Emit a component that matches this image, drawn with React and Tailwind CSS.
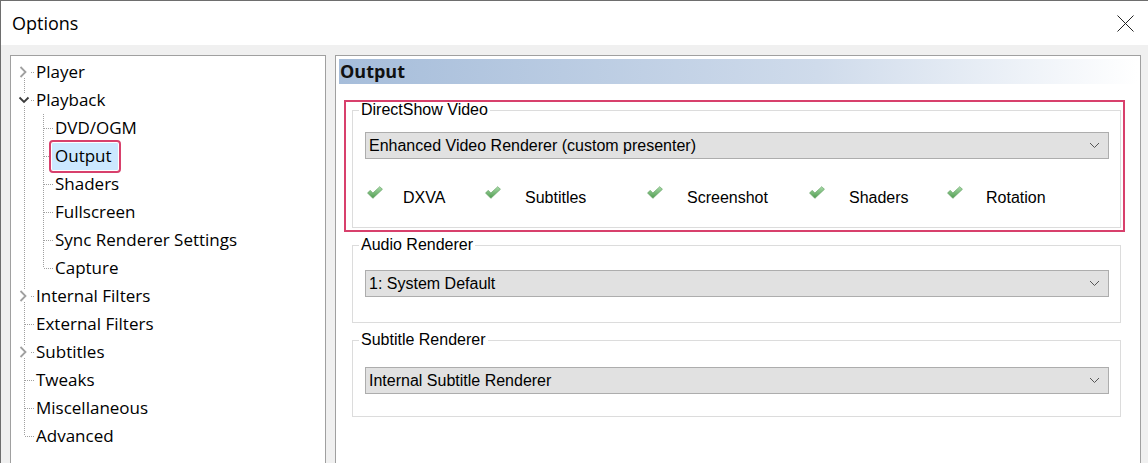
import React from 'react';

const treeItems = [
  { label: 'Player', level: 0, toggle: 'closed', first: true },
  { label: 'Playback', level: 0, toggle: 'open' },
  { label: 'DVD/OGM', level: 1 },
  { label: 'Output', level: 1, selected: true },
  { label: 'Shaders', level: 1 },
  { label: 'Fullscreen', level: 1 },
  { label: 'Sync Renderer Settings', level: 1 },
  { label: 'Capture', level: 1, last: true },
  { label: 'Internal Filters', level: 0, toggle: 'closed' },
  { label: 'External Filters', level: 0 },
  { label: 'Subtitles', level: 0, toggle: 'closed' },
  { label: 'Tweaks', level: 0 },
  { label: 'Miscellaneous', level: 0 },
  { label: 'Advanced', level: 0, last: true },
];

const features = [
  { label: 'DXVA', width: 'w-[118px]', gap: 'w-[36px]' },
  { label: 'Subtitles', width: 'w-[162px]', gap: 'w-[40px]' },
  { label: 'Screenshot', width: 'w-[162px]', gap: 'w-[40px]' },
  { label: 'Shaders', width: 'w-[138px]', gap: 'w-[40px]' },
  { label: 'Rotation', width: 'w-[120px]', gap: 'w-[39px]' },
];

const dot = { stroke: '#a0a0a0', strokeWidth: 1, strokeDasharray: '1 1', shapeRendering: 'crispEdges' };

// tree connector lines + expand arrows
const Gutter = ({ item }) => {
  if (item.level === 1) {
    return (
      <svg width="44" height="28" className="shrink-0">
        <line x1="13.5" y1="0" x2="13.5" y2="28" {...dot} />
        <line x1="32.5" y1="0" x2="32.5" y2={item.last ? 14 : 28} {...dot} />
        <line x1="33" y1="14.5" x2="42" y2="14.5" {...dot} />
      </svg>
    );
  }
  return (
    <svg width="25" height="28" className="shrink-0">
      {!item.first && <line x1="13.5" y1="0" x2="13.5" y2={item.toggle ? 8 : 14} {...dot} />}
      {!item.last && <line x1="13.5" y1={item.toggle ? 20 : 14} x2="13.5" y2="28" {...dot} />}
      <line x1={item.toggle ? 20 : 14} y1="14.5" x2="24" y2="14.5" {...dot} />
      {item.toggle === 'closed' && (
        <path d="M9.5 9 L14.5 14 L9.5 19" fill="none" stroke="#a0a0a0" strokeWidth="1.8" />
      )}
      {item.toggle === 'open' && (
        <path d="M8.5 11.5 L13 16 L17.5 11.5" fill="none" stroke="#3c3c3c" strokeWidth="1.8" />
      )}
    </svg>
  );
};

const Check = () => (
  <svg width="16" height="13" viewBox="0 0 15 12" className="mt-[-2px] shrink-0">
    <defs>
      <linearGradient id="chk" x1="0" y1="0" x2="0" y2="1">
        <stop offset="0" stopColor="#a9dca9" />
        <stop offset="1" stopColor="#4f9b4f" />
      </linearGradient>
    </defs>
    <polygon points="0.5,6.5 3,4 5.5,6.5 12,0.5 14.5,3 5.5,11.5" fill="url(#chk)" stroke="#5e9e5e" strokeWidth="0.6" />
  </svg>
);

const Combo = ({ value, className }) => (
  <div className={`flex h-[27px] items-center justify-between border border-[#adadad] bg-[#e1e1e1] pl-[3px] pr-[8px] ${className}`}>
    <span className="text-[16px] text-black">{value}</span>
    <svg width="11" height="7" viewBox="0 0 11 7">
      <path d="M1 1 L5.5 5.5 L10 1" fill="none" stroke="#555" strokeWidth="1" />
    </svg>
  </div>
);

const GroupBox = ({ title, children, className }) => (
  <fieldset className={`w-[769px] border border-[#dcdcdc] pl-[12px] pr-[11px] ${className}`}>
    <legend className="-ml-[6px] px-[2px] text-[16px] leading-[16px] text-black">{title}</legend>
    {children}
  </fieldset>
);

export default function App() {
  return (
    <div
      className="flex h-[463px] w-[1148px] flex-col overflow-hidden border-l border-t border-[#6e6e6e] bg-[#f0f0f0]"
      style={{ fontFamily: '"Liberation Sans", Arial, sans-serif' }}
    >
      {/* Title bar */}
      <div className="flex h-[44px] shrink-0 items-center justify-between bg-white pl-[11px] pr-[14px]">
        <span className="text-[18px] text-[#000]" style={{ fontFamily: '"Open Sans", sans-serif' }}>Options</span>
        <svg width="17" height="17" viewBox="0 0 17 17">
          <path d="M0.5 0.5 L16.5 16.5 M16.5 0.5 L0.5 16.5" stroke="#222" strokeWidth="1" />
        </svg>
      </div>

      {/* Body */}
      <div className="flex shrink-0 items-start pl-[9px] pt-[10px]">
        {/* Tree */}
        <div
          className="h-[430px] w-[316px] shrink-0 border border-[#a0a0a0] bg-white pt-[2px]"
          style={{ fontFamily: '"Open Sans", sans-serif' }}
        >
          {treeItems.map((item) => (
            <div key={item.label} className="flex h-[28px] items-center">
              <Gutter item={item} />
              {item.selected ? (
                <span className="-ml-[3px] flex h-[27px] items-center rounded-[1px] bg-[#cce8ff] pl-[3px] pr-[6px] text-[17px] text-black outline-2 outline-offset-[1px] outline-[#d8406c]">
                  {item.label}
                </span>
              ) : (
                <span className="text-[17px] text-black">{item.label}</span>
              )}
            </div>
          ))}
        </div>

        {/* Page */}
        <div className="ml-[9px] h-[430px] w-[806px] shrink-0 border border-[#a0a0a0] bg-white px-[3px] pt-[3px]">
          <div className="flex h-[25px] items-center bg-gradient-to-r from-[#a6bdda] via-[#cfdbeb] via-60% to-white pl-[1px]">
            <span className="text-[18px] font-bold text-[#111]" style={{ fontFamily: '"Open Sans", sans-serif' }}>Output</span>
          </div>

          <div className="ml-[5px] mt-[16px] w-[781px] border-2 border-[#d8406c] pb-[2px] pl-[6px] pr-[2px]">
            <GroupBox title="DirectShow Video" className="pb-[19px]">
              <Combo value="Enhanced Video Renderer (custom presenter)" className="mt-[14px]" />
              <div className="mt-[29px] flex h-[20px] items-start pl-[2px]">
                {features.map((f) => (
                  <div key={f.label} className={`flex items-start ${f.width}`}>
                    <div className={`${f.gap} shrink-0`}>
                      <Check />
                    </div>
                    <span className="text-[16px] leading-[20px] text-black">{f.label}</span>
                  </div>
                ))}
              </div>
            </GroupBox>
          </div>

          <GroupBox title="Audio Renderer" className="ml-[13px] mt-[5px] pb-[25px]">
            <Combo value="1: System Default" className="mt-[17px]" />
          </GroupBox>

          <GroupBox title="Subtitle Renderer" className="ml-[13px] mt-[9px] pb-[22px]">
            <Combo value="Internal Subtitle Renderer" className="mt-[19px]" />
          </GroupBox>
        </div>
      </div>
    </div>
  );
}
